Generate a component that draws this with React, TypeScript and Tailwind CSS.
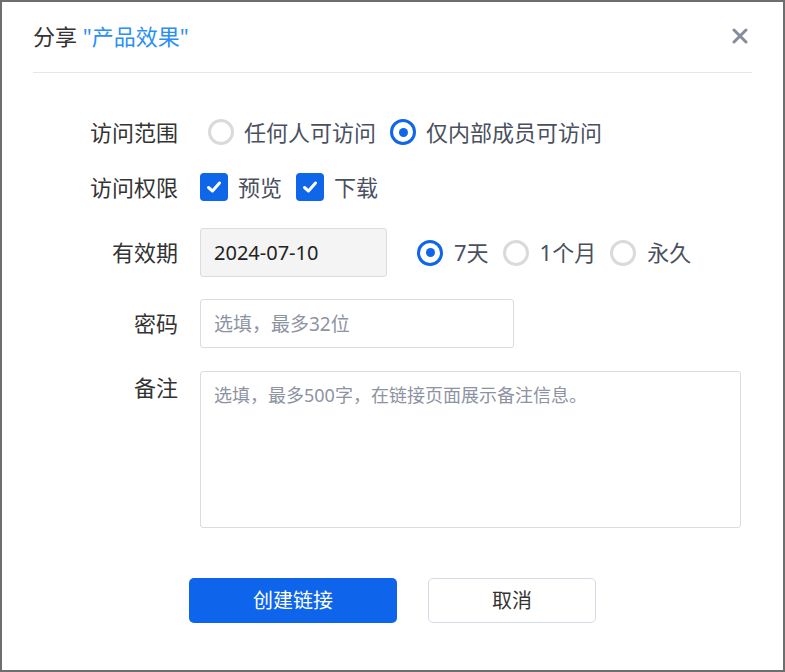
import React, { useState } from 'react'

const FONT = { fontFamily: '"Noto Sans", "Noto Sans CJK SC", sans-serif' }

function Radio({ checked }: { checked: boolean }) {
  return checked ? (
    <span className="flex h-[26px] w-[26px] shrink-0 items-center justify-center rounded-full border-[3px] border-[#0f66e9]">
      <span className="h-[9px] w-[9px] rounded-full bg-[#0f66e9]" />
    </span>
  ) : (
    <span className="h-[26px] w-[26px] shrink-0 rounded-full border-[3px] border-[#dadada]" />
  )
}

function Checkbox() {
  return (
    <span className="flex h-[28px] w-[28px] shrink-0 items-center justify-center rounded-[4px] bg-[#0f66e9]">
      <svg width="18" height="18" viewBox="0 0 18 18" fill="none">
        <path d="M3.5 9.5L7.5 13L14.5 5" stroke="white" strokeWidth="3" strokeLinecap="round" strokeLinejoin="round" />
      </svg>
    </span>
  )
}

export default function App() {
  const [scope, setScope] = useState<'all' | 'inner'>('inner')
  const [expire, setExpire] = useState<'7d' | '1m' | 'forever'>('7d')

  return (
    <div className="h-[672px] w-[785px] bg-[#6e6e6e] p-[2px]" style={FONT}>
      <div className="h-full w-full bg-white px-[31px]">
        {/* header */}
        <div className="flex h-[71px] items-center justify-between border-b border-[#e6e6e6] pb-[2px]">
          <div className="text-[22px] leading-[30px] text-[#333]">
            分享 <span className="text-[#2a8ff5]">"产品效果"</span>
          </div>
          <button className="mr-[-3px] flex h-[30px] w-[30px] items-center justify-center">
            <svg width="16" height="16" viewBox="0 0 16 16">
              <path d="M2 2L14 14M14 2L2 14" stroke="#878c9c" strokeWidth="3" strokeLinecap="round" />
            </svg>
          </button>
        </div>

        {/* form */}
        <div className="flex flex-col text-[22px] text-[#333]">
          <div className="mt-[39px] flex h-[40px] items-center">
            <div className="w-[145px] text-right">访问范围</div>
            <div className="ml-[30px] flex items-center text-[#4a5060]">
              <label className="flex items-center gap-[10px]" onClick={() => setScope('all')}>
                <Radio checked={scope === 'all'} />
                任何人可访问
              </label>
              <label className="ml-[14px] flex items-center gap-[10px]" onClick={() => setScope('inner')}>
                <Radio checked={scope === 'inner'} />
                仅内部成员可访问
              </label>
            </div>
          </div>

          <div className="mt-[15px] flex h-[40px] items-center">
            <div className="w-[145px] text-right">访问权限</div>
            <div className="ml-[22px] flex items-center text-[#4a5060]">
              <label className="flex items-center gap-[10px]">
                <Checkbox />
                预览
              </label>
              <label className="ml-[14px] flex items-center gap-[10px]">
                <Checkbox />
                下载
              </label>
            </div>
          </div>

          <div className="mt-[21px] flex h-[49px] items-center">
            <div className="w-[145px] text-right">有效期</div>
            <div className="ml-[22px] flex h-full w-[187px] items-center rounded-[3px] border border-[#dcdcdc] bg-[#f4f4f4] px-[13px] text-[20px] text-[#222]">
              2024-07-10
            </div>
            <div className="ml-[30px] flex items-center text-[#4a5060]">
              <label className="flex items-center gap-[11px]" onClick={() => setExpire('7d')}>
                <Radio checked={expire === '7d'} />
                7天
              </label>
              <label className="ml-[14px] flex items-center gap-[11px]" onClick={() => setExpire('1m')}>
                <Radio checked={expire === '1m'} />
                1个月
              </label>
              <label className="ml-[14px] flex items-center gap-[11px]" onClick={() => setExpire('forever')}>
                <Radio checked={expire === 'forever'} />
                永久
              </label>
            </div>
          </div>

          <div className="mt-[22px] flex h-[49px] items-center">
            <div className="w-[145px] text-right">密码</div>
            <input
              className="ml-[22px] h-full w-[314px] rounded-[3px] border border-[#dcdcdc] px-[13px] text-[19px] outline-none placeholder:text-[#8d93a2]"
              placeholder="选填，最多32位"
            />
          </div>

          <div className="mt-[23px] flex items-start">
            <div className="w-[145px] text-right leading-[32px]">备注</div>
            <textarea
              className="ml-[22px] h-[157px] w-[541px] resize-none rounded-[3px] border border-[#dcdcdc] px-[13px] py-[10px] text-[18px] leading-[26px] outline-none placeholder:text-[#8d93a2]"
              placeholder="选填，最多500字，在链接页面展示备注信息。"
            />
          </div>

          <div className="mt-[50px] flex items-center text-[20px]">
            <button className="ml-[156px] h-[45px] w-[208px] rounded-[5px] bg-[#0e65eb] text-white">创建链接</button>
            <button className="ml-[31px] h-[45px] w-[168px] rounded-[5px] border border-[#d5dbe5] bg-white text-[#333]">取消</button>
          </div>
        </div>
      </div>
    </div>
  )
}
